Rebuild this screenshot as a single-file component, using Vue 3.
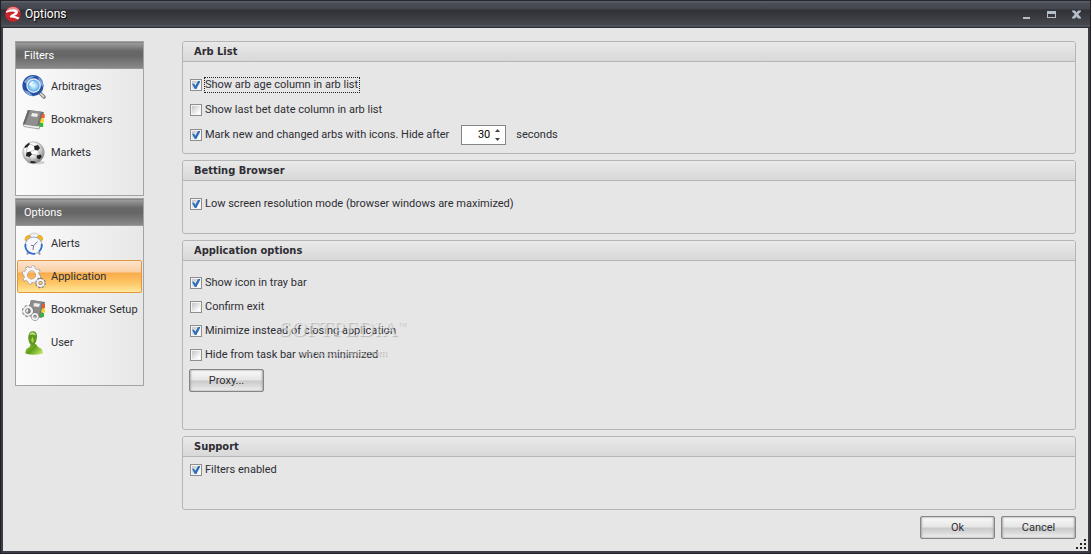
<script setup>
import { ref, reactive } from 'vue'

const sections = [
  {
    title: 'Filters',
    items: [
      { name: 'Arbitrages', icon: 'search' },
      { name: 'Bookmakers', icon: 'book' },
      { name: 'Markets', icon: 'ball' },
    ],
  },
  {
    title: 'Options',
    items: [
      { name: 'Alerts', icon: 'clock' },
      { name: 'Application', icon: 'gears' },
      { name: 'Bookmaker Setup', icon: 'setup' },
      { name: 'User', icon: 'user' },
    ],
  },
]

const active = ref('Application')

const opts = reactive({
  ageColumn: true,
  betDateColumn: false,
  markNew: true,
  hideAfter: 30,
  lowRes: true,
  trayIcon: true,
  confirmExit: false,
  minimize: true,
  hideFromTaskBar: false,
  filters: true,
})

const appOptions = [
  { key: 'trayIcon', label: 'Show icon in tray bar' },
  { key: 'confirmExit', label: 'Confirm exit' },
  { key: 'minimize', label: 'Minimize instead of closing application' },
  { key: 'hideFromTaskBar', label: 'Hide from task bar when minimized' },
]

function step(n) {
  opts.hideAfter = Math.max(0, Number(opts.hideAfter) + n)
}
</script>

<template>
  <div class="window">
    <header class="titlebar">
      <svg class="logo" viewBox="0 0 16 16" aria-hidden="true">
        <circle cx="8" cy="8" r="7.8" fill="#c9252b" />
        <path d="M1 6A7.4 7.4 0 0 1 15 6Q8 1 1 6" fill="#e88b8d" />
        <path d="M1 5.6Q6 2.4 10.4 3.4Q14 4.6 12.6 7.4Q11.4 9.2 9 9.8Q11.6 10.4 14.6 11.8L13 13.4Q9 11.4 5.6 11.6Q4.4 11 5 10Q6.4 8.4 9 7.6Q10.4 6.8 9.6 6Q7.4 4.8 1 6.8Z" fill="#fff" />
      </svg>
      <h1>Options</h1>
      <div class="controls">
        <button type="button" aria-label="Minimize">
          <svg viewBox="0 0 9 9"><path d="M1 7h7v2H1z" fill="#b5bfca" /></svg>
        </button>
        <button type="button" aria-label="Maximize">
          <svg viewBox="0 0 9 9"><path d="M0 1h9v7H0zM1 4v3h7V4z" fill="#b5bfca" fill-rule="evenodd" /></svg>
        </button>
        <button type="button" aria-label="Close">
          <svg viewBox="0 0 9 9"><path d="M0 0.5h3L4.5 2.5 6 .5h3v1L6.2 4.3 9 7.5v1H6L4.5 6.5 3 8.5H0v-1L2.8 4.3 0 1.5z" fill="#b5bfca" /></svg>
        </button>
      </div>
    </header>

    <div class="client">
      <nav class="sidebar">
        <section v-for="s in sections" :key="s.title" class="menu">
          <h2>{{ s.title }}</h2>
          <button
            v-for="item in s.items"
            :key="item.name"
            type="button"
            class="menu-item"
            :class="{ active: active === item.name }"
            @click="active = item.name"
          >
            <svg v-if="item.icon === 'search'" viewBox="0 0 24 24">
              <defs>
                <radialGradient id="lens"><stop offset="0" stop-color="#e8fbff" /><stop offset=".6" stop-color="#8bcdf7" /><stop offset="1" stop-color="#408ce0" /></radialGradient>
              </defs>
              <path d="M16 16L22 22" stroke="#777" stroke-width="3.4" stroke-linecap="round" />
              <path d="M16 16L21.6 21.6" stroke="#ddd" stroke-width="1.6" stroke-linecap="round" />
              <circle cx="11" cy="10.6" r="10.6" fill="#2450a4" />
              <path d="M2 7Q6 0 13 1L8 4L5 9zM16 2Q22 6 21 12L18 9zM2 15Q5 21 11 21L7 17z" fill="#7fa5de" />
              <circle cx="11.6" cy="10.6" r="6.6" fill="url(#lens)" stroke="#dfe8f3" stroke-width="1.4" />
              <path d="M7 10Q8 6 12 6Q10 8 10 11Z" fill="#fff" opacity=".8" />
            </svg>
            <svg v-else-if="item.icon === 'book'" viewBox="0 0 24 24">
              <path d="M6 2L22 4L17 21L1 17Z" fill="#727272" />
              <path d="M6 2L19 3.6L15 18L1 16Z" fill="#8f8f8f" />
              <path d="M6 2L8 2.2L3 16.4L1 16Z" fill="#666" />
              <path d="M1 16L15 18L18 17.4L17 21L2 18.6Z" fill="#eee" stroke="#777" stroke-width=".6" />
              <path d="M10 5L16 5.8L15 9L9 8.2Z" fill="#eee" />
              <path d="M20 6h2.6v4H19z" fill="#f05a28" /><path d="M19 10.4h3v4h-4z" fill="#ffd21f" /><path d="M17.6 15h3.6v4h-4z" fill="#35b93b" />
            </svg>
            <svg v-else-if="item.icon === 'ball'" viewBox="0 0 24 24">
              <defs>
                <radialGradient id="leather" cx=".4" cy=".35" r=".65"><stop offset=".4" stop-color="#fff" /><stop offset="1" stop-color="#888" /></radialGradient>
              </defs>
              <ellipse cx="14" cy="21.5" rx="9" ry="1.8" fill="#ccc" />
              <circle cx="11.5" cy="11.5" r="10.8" fill="url(#leather)" stroke="#999" stroke-width=".5" />
              <path d="M12 5L16 4L18 7L16 9.4L12.6 9ZM4.4 11.4L8.4 10.6L10 13.4L7.4 16L4 15ZM14.8 14.4L18.6 13.4L19.8 15.8L17.6 18.2L14.8 17.2ZM3 5L7 1.8L8 3L5.4 6L2.4 7.2ZM9 20L13 20.4L14 21.8Q11 22.6 8 21.6Z" fill="#222" />
              <path d="M8.4 10.6L12.6 9M10 13.4L14.8 14.4M16 9.4L18.6 13.4M7.4 16L9 20M14.8 17.2L13 20.4M5.4 6L4.4 11.4M8 3L12 5" stroke="#999" stroke-width=".6" />
            </svg>
            <svg v-else-if="item.icon === 'clock'" viewBox="0 0 24 24">
              <path d="M7 4Q11-1 17 3" stroke="#ddd" stroke-width="2" fill="none" />
              <path d="M3 8Q3 3 8 3.6L9.6 6L5 10ZM14.4 5.6L16.6 3.4Q21 3 20.6 8L18 9.6Z" fill="#f6b51f" stroke="#ca861a" stroke-width=".5" />
              <path d="M7 19L5 22.4M16 19L18 22.4" stroke="#999" stroke-width="2" />
              <circle cx="11.6" cy="13.4" r="8.4" fill="#f6f8fa" stroke="#8fa8cc" stroke-width="1" />
              <path d="M3.6 12A8 8 0 0 0 13 21.6M19.6 12A8 8 0 0 1 17 19.4" fill="none" stroke="#2f6cd0" stroke-width="1.8" />
              <path d="M15.6 9.6L11.6 13.6L9 13.4M11.6 13.6L11 18" fill="none" stroke="#667" stroke-width=".9" />
            </svg>
            <svg v-else-if="item.icon === 'gears'" viewBox="0 0 24 24">
              <g fill="none">
                <circle cx="9.5" cy="10" r="7.4" stroke="#868686" stroke-width="4.4" stroke-dasharray="2.9 2.91" />
                <circle cx="9.5" cy="10" r="5.9" stroke="#888" stroke-width="4" />
                <circle cx="9.5" cy="10" r="7.2" stroke="#f6f6f6" stroke-width="3.6" stroke-dasharray="2.5 3.15" stroke-dashoffset="-.2" />
                <circle cx="9.5" cy="10" r="5.9" stroke="#f6f6f6" stroke-width="3" />
                <circle cx="18.5" cy="18" r="4" stroke="#777" stroke-width="2.6" stroke-dasharray="1.7 1.44" />
                <circle cx="18.5" cy="18" r="2.9" stroke="#777" stroke-width="3" />
                <circle cx="18.5" cy="18" r="3.1" stroke="#f4f4f4" stroke-width="2" />
              </g>
            </svg>
            <svg v-else-if="item.icon === 'setup'" viewBox="0 0 24 24">
              <path d="M9 2L23 4L20 20L5 17Z" fill="#777" />
              <path d="M9 2L20 3.8L17 18L5 16Z" fill="#8b8b8b" />
              <path d="M12 5L18 5.8L17 9L11.4 8.2Z" fill="#eee" />
              <path d="M20.4 6h2.6v4h-3z" fill="#f05a28" /><path d="M20 10.4h3v4h-4z" fill="#ffd21f" /><path d="M19 15h3v4h-4z" fill="#35b93b" />
              <g fill="none">
                <circle cx="6" cy="13" r="4.8" stroke="#858585" stroke-width="2.8" stroke-dasharray="2 1.8" />
                <circle cx="6" cy="13" r="3.6" stroke="#777" stroke-width="3.4" />
                <circle cx="6" cy="13" r="3.9" stroke="#f2f2f2" stroke-width="2.4" />
                <circle cx="13" cy="18.6" r="2.7" stroke="#777" stroke-width="3" />
                <circle cx="13" cy="18.6" r="2.7" stroke="#f2f2f2" stroke-width="1.8" />
              </g>
            </svg>
            <svg v-else viewBox="0 0 24 24">
              <defs>
                <linearGradient id="person" x2="1" y2=".6"><stop offset="0" stop-color="#a8d84a" /><stop offset=".5" stop-color="#5f9d18" /><stop offset="1" stop-color="#b0dc58" /></linearGradient>
              </defs>
              <path d="M7.8 14L13.8 13Q15 16 19 17.4Q21 19 20.6 22.4Q12 25 3.4 22.4Q3 17.4 7.8 16Z" fill="url(#person)" />
              <path d="M6.4 5Q7-.2 11.4 .2Q15.4 .8 15 6Q14.6 11 12.6 13.6Q10 15.6 8 13Q5.6 9 6.4 5Z" fill="#60971f" />
              <path d="M7.4 4Q8 1 11 1.4Q13.8 2 13.8 4.4Q10 2.8 7.4 4Z" fill="#c1e385" />
              <path d="M10.6 5.6L11.8 9L11 12L9 9.6Z" fill="#a8d450" />
            </svg>
            <span>{{ item.name }}</span>
          </button>
        </section>
      </nav>

      <main class="content">
        <section class="group arb">
          <h3>Arb List</h3>
          <div class="rows">
            <label class="check focused"><input v-model="opts.ageColumn" type="checkbox"><span>Show arb age column in arb list</span></label>
            <label class="check"><input v-model="opts.betDateColumn" type="checkbox"><span>Show last bet date column in arb list</span></label>
            <div class="inline">
              <label class="check"><input v-model="opts.markNew" type="checkbox"><span>Mark new and changed arbs with icons. Hide after</span></label>
              <div class="spinner">
                <input id="hide-after" v-model="opts.hideAfter" type="text" inputmode="numeric" aria-label="Hide after, seconds">
                <div class="arrows">
                  <button type="button" aria-label="Increase" @click="step(1)"><svg viewBox="0 0 5 3"><path d="M0 3L2.5 0L5 3z" fill="#444" /></svg></button>
                  <button type="button" aria-label="Decrease" @click="step(-1)"><svg viewBox="0 0 5 3"><path d="M0 0L2.5 3L5 0z" fill="#444" /></svg></button>
                </div>
              </div>
              <label for="hide-after">seconds</label>
            </div>
          </div>
        </section>

        <section class="group browser">
          <h3>Betting Browser</h3>
          <div class="rows">
            <label class="check"><input v-model="opts.lowRes" type="checkbox"><span>Low screen resolution mode (browser windows are maximized)</span></label>
          </div>
        </section>

        <section class="group app">
          <h3>Application options</h3>
          <div class="rows">
            <label v-for="o in appOptions" :key="o.key" class="check">
              <input v-model="opts[o.key]" type="checkbox"><span>{{ o.label }}</span>
            </label>
            <button type="button" class="btn">Proxy...</button>
          </div>
          <div class="watermark">
            <div class="mark">SOFTPEDIA<sup>™</sup></div>
            <div class="site">www.softpedia.com</div>
          </div>
        </section>

        <section class="group support">
          <h3>Support</h3>
          <div class="rows">
            <label class="check"><input v-model="opts.filters" type="checkbox"><span>Filters enabled</span></label>
          </div>
        </section>

        <footer class="actions">
          <button type="button" class="btn">Ok</button>
          <button type="button" class="btn">Cancel</button>
        </footer>
      </main>

      <svg class="grip" viewBox="0 0 10 10" aria-hidden="true">
        <path d="M8 0h2v2H8zM4 4h2v2H4zM8 4h2v2H8zM0 8h2v2H0zM4 8h2v2H4zM8 8h2v2H8z" fill="#222" />
      </svg>
    </div>
  </div>
</template>

<style>
body {
  background: #e6e6e6;
}
</style>

<style scoped>
* {
  box-sizing: border-box;
}

.window {
  display: flex;
  flex-direction: column;
  min-height: 100vh;
  padding: 0 2px 2px;
  border: solid #202126;
  border-width: 0 1px 1px;
  background: #3b3d44;
  font: 11px/14px Roboto, Tahoma, sans-serif;
  color: #2d2d33;
}

button,
input {
  font: inherit;
  color: inherit;
  margin: 0;
  padding: 0;
}

button {
  border: 0;
  background: none;
}

h1, h2, h3 {
  margin: 0;
  font-size: inherit;
}

.titlebar {
  display: flex;
  align-items: center;
  height: 28px;
  margin: 0 -2px;
  padding: 0 9px 0 4px;
  background: linear-gradient(#25262b 0 1px, #5c5f68 1px 2px, #4c4e57 3px, #44464f 9px, #303136 10px, #46484f 25px, #5b5d65 26px, #1f2024 28px);
}

.logo {
  width: 16px;
  height: 16px;
}

.titlebar h1 {
  margin-left: 4px;
  font-size: 12px;
  font-weight: 400;
  color: #fff;
  text-shadow: 1px 1px 1px #000;
}

.controls {
  display: flex;
  gap: 16px;
  margin-left: auto;
}

.controls button {
  display: flex;
}

.controls svg {
  width: 9px;
  height: 9px;
}

.client {
  position: relative;
  flex: 1;
  display: flex;
  gap: 38px;
  padding: 13px 12px 12px;
  background: #e6e6e6;
}

.sidebar {
  display: flex;
  flex-direction: column;
  gap: 2px;
  width: 129px;
  flex-shrink: 0;
}

.menu {
  padding-bottom: 26px;
  border: 1px solid #a3a3a3;
  background: linear-gradient(90deg, #fbfbfb, #e7e7e7);
}

.menu h2 {
  height: 27px;
  margin-bottom: 1px;
  padding: 0 8px;
  border-top: 1px solid #858585;
  border-bottom: 1px solid #999;
  background: linear-gradient(#9c9c9c, #686868 8px, #666 13px, #898989);
  font-weight: 400;
  line-height: 26px;
  color: #fff;
}

.menu-item {
  display: flex;
  align-items: center;
  gap: 5px;
  width: calc(100% - 2px);
  height: 33px;
  margin: 0 1px;
  padding: 0 4px;
  border: 1px solid transparent;
  text-align: left;
  white-space: nowrap;
}

.menu-item svg {
  width: 24px;
  height: 24px;
  flex-shrink: 0;
}

.menu-item.active {
  border-color: #e5953a;
  border-radius: 2px;
  background: linear-gradient(#fce4cf, #fbcfa0 11px, #f9ab4b 12px, #fdc665 22px, #ffe79b);
}

.content {
  flex: 1;
  min-width: 0;
  display: flex;
  flex-direction: column;
  gap: 6px;
}

.group {
  position: relative;
  border: 1px solid #b5b5b5;
  border-radius: 3px;
}

.group h3 {
  height: 20px;
  padding: 0 11px;
  border-bottom: 1px solid #b5b5b5;
  border-radius: 2px 2px 0 0;
  background: linear-gradient(#e9e9e9, #d8d8d8);
  font-family: "DejaVu Sans Condensed", Tahoma, sans-serif;
  font-weight: 700;
  line-height: 20px;
}

.rows {
  display: flex;
  flex-direction: column;
  align-items: flex-start;
  padding: 0 6px;
}

.arb .rows {
  gap: 5px;
  padding-top: 13px;
  padding-bottom: 8px;
}

.browser .rows {
  padding-top: 13px;
  padding-bottom: 19px;
}

.app .rows {
  gap: 4px;
  padding-top: 12px;
  padding-bottom: 37px;
}

.support .rows {
  padding-top: 3px;
  padding-bottom: 29px;
}

.check {
  display: flex;
  align-items: center;
  gap: 2px;
  height: 20px;
  padding-left: 1px;
  white-space: nowrap;
}

.check span {
  padding-right: 1px;
  border: 1px dotted transparent;
}

.check.focused span {
  border-color: #222;
}

.check input {
  appearance: none;
  position: relative;
  width: 12px;
  height: 12px;
  border: 1px solid #8e8e8e;
  outline: 1px solid #f4f4f4;
  outline-offset: -2px;
  background: linear-gradient(135deg, #bcbcbc, #fff 80%);
}

.check input:checked::after {
  content: "";
  position: absolute;
  inset: 1px;
  background: #2d6fbd;
  clip-path: polygon(0 35%, 25% 35%, 42% 60%, 75% 0, 100% 0, 100% 12%, 55% 100%, 34% 100%);
}

.inline {
  display: flex;
  align-items: center;
}

.spinner {
  display: flex;
  width: 45px;
  height: 20px;
  margin: 0 10px;
  border: 1px solid #858585;
  background: #fff;
}

.spinner input {
  flex: 1;
  min-width: 0;
  border: 0;
  outline: 0;
  background: none;
  text-align: right;
  color: #000;
}

.arrows {
  display: flex;
  flex-direction: column;
  width: 15px;
}

.arrows button {
  flex: 1;
  display: flex;
  align-items: center;
  justify-content: center;
}

.arrows svg {
  width: 5px;
  height: 3px;
}

.btn {
  width: 75px;
  height: 23px;
  border: 1px solid #858585;
  border-radius: 2px;
  background: linear-gradient(#fafafa, #e5e5e5 10px, #c9c9c9 11px, #dedede 17px, #f4f4f4);
  box-shadow: inset 1px 0 2px #aaa, inset -1px 0 2px #aaa;
}

.actions {
  display: flex;
  justify-content: flex-end;
  gap: 6px;
}

.grip {
  position: absolute;
  right: 2px;
  bottom: 2px;
  width: 10px;
  height: 10px;
}

.watermark {
  position: absolute;
  left: 96px;
  top: 76px;
  font-family: "Liberation Serif", serif;
  color: rgba(245, 245, 245, 0.6);
  text-shadow: 1px 1px 1px rgba(120, 120, 120, 0.45);
  pointer-events: none;
}

.mark {
  font-size: 22px;
  line-height: 24px;
}

.mark sup {
  font-size: 9px;
  line-height: 9px;
}

.site {
  padding-left: 20px;
  font-size: 11px;
  line-height: 22px;
}
</style>
